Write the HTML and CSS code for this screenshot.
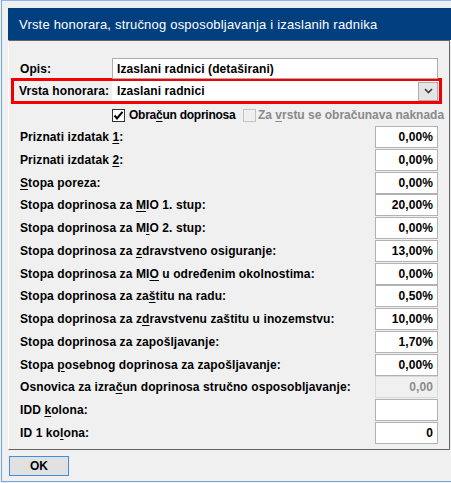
FILE: index.html
```html
<!DOCTYPE html>
<html>
<head>
<meta charset="utf-8">
<link rel="stylesheet" href="styles.css">
</head>
<body>
<div class="window">
  <div class="titlebar">Vrste honorara, stručnog osposobljavanja i izaslanih radnika</div>
  <div class="panel">
    <div class="row-text">
      <span class="lbl lbl-main">Opis:</span>
      <div class="textbox">Izaslani radnici (detaširani)</div>
    </div>
    <div class="row-combo">
      <span class="lbl lbl-combo">Vrsta honorara:</span>
      <div class="combo">
        <span class="combo-val">Izaslani radnici</span>
        <span class="combo-btn"><svg width="9" height="6" viewBox="0 0 9 6"><polyline points="1,1 4.5,4.5 8,1" fill="none" stroke="#3c3c3c" stroke-width="1.6"/></svg></span>
      </div>
    </div>
    <div class="row-check">
      <span class="check"><svg width="11" height="11" viewBox="0 0 11 11"><polyline points="1.5,5.5 4,8.5 9.5,1.8" fill="none" stroke="#000" stroke-width="2"/></svg></span>
      <span class="check-lbl first">Obra<u>č</u>un doprinosa</span>
      <span class="check check-dis"></span>
      <span class="check-lbl dis">Za <u>v</u>rstu se obračunava naknada</span>
    </div>
    <div class="grid">
      <span class="lbl">Priznati izdatak <u>1</u>:</span><div class="num">0,00%</div>
      <span class="lbl">Priznati izdatak <u>2</u>:</span><div class="num">0,00%</div>
      <span class="lbl"><u>S</u>topa poreza:</span><div class="num">0,00%</div>
      <span class="lbl">Stopa doprinosa za <u>M</u>IO 1. stup:</span><div class="num">20,00%</div>
      <span class="lbl">Stopa doprinosa za M<u>I</u>O 2. stup:</span><div class="num">0,00%</div>
      <span class="lbl">Stopa doprinosa za <u>z</u>dravstveno osiguranje:</span><div class="num">13,00%</div>
      <span class="lbl">Stopa doprinosa za MI<u>O</u> u određenim okolnostima:</span><div class="num">0,00%</div>
      <span class="lbl">Stopa doprinosa za za<u>š</u>titu na radu:</span><div class="num">0,50%</div>
      <span class="lbl">Stopa doprinosa za z<u>d</u>ravstvenu zaštitu u inozemstvu:</span><div class="num">10,00%</div>
      <span class="lbl">Stopa doprinosa za zapošljavanje:</span><div class="num">1,70%</div>
      <span class="lbl">Stopa <u>p</u>osebnog doprinosa za zapošljavanje:</span><div class="num">0,00%</div>
      <span class="lbl">Osnovica za izra<u>č</u>un doprinosa stručno osposobljavanje:</span><div class="num num-dis">0,00</div>
      <span class="lbl">IDD <u>k</u>olona:</span><div class="num"></div>
      <span class="lbl">ID 1 ko<u>l</u>ona:</span><div class="num">0</div>
    </div>
  </div>
  <div class="footer">
    <div class="btn">OK</div>
  </div>
</div>
</body>
</html>
```
FILE: styles.css
```css
html, body {
  margin: 0;
  padding: 0;
  background: #f0f0f0;
}
body {
  width: 451px;
  height: 483px;
  overflow: hidden;
  font-family: "Liberation Sans", Arial, sans-serif;
  font-weight: bold;
  font-size: 12px;
  letter-spacing: 0.1px;
  color: #000;
}
.window {
  margin-left: 1px;
  height: 482px;
  border-left: 1px solid #6fa5e3;
  border-top: 1px solid #8ab8ec;
  border-bottom: 1px solid #6fa5e3;
  padding: 7px 0 0 6px;
  box-sizing: border-box;
}
.titlebar {
  height: 32px;
  background: #013f7f;
  color: #fff;
  font-family: "Liberation Sans", sans-serif;
  font-weight: normal;
  font-size: 13px;
  letter-spacing: 0.2px;
  display: flex;
  align-items: center;
  padding-left: 11px;
}
.panel {
  margin-right: 1px;
  border-top: 1px solid #646464;
  border-left: 1px solid #fcfcfc;
  border-right: 1px solid #646464;
  border-bottom: 1px solid #646464;
  padding: 17px 11px 4px 11px;
}
.lbl {
  white-space: nowrap;
}
.row-text {
  display: flex;
  align-items: center;
  height: 21px;
}
.lbl-main {
  width: 92px;
  flex: none;
}
.textbox {
  flex: 1;
  height: 21px;
  box-sizing: border-box;
  border: 1px solid #acacac;
  background: #fff;
  padding-left: 4px;
  display: flex;
  align-items: center;
}
.row-combo {
  margin: -1px -4px 0 -9px;
  border: 3px solid #f20000;
  height: 20px;
  display: flex;
  align-items: center;
  padding: 0 1px 0 5px;
}
.lbl-combo {
  width: 93px;
  flex: none;
}
.combo {
  flex: 1;
  height: 20px;
  box-sizing: border-box;
  background: #fff;
  display: flex;
  align-items: center;
  padding-left: 5px;
}
.combo-val {
  flex: 1;
}
.combo-btn {
  width: 20px;
  height: 19px;
  box-sizing: border-box;
  border: 1px solid #adadad;
  background: #e5e5e5;
  display: flex;
  align-items: center;
  justify-content: center;
}
.row-check {
  height: 22px;
  display: flex;
  align-items: center;
  padding-left: 92px;
}
.check {
  width: 13px;
  height: 13px;
  box-sizing: border-box;
  border: 1px solid #333;
  background: #fff;
  display: flex;
  align-items: center;
  justify-content: center;
  flex: none;
}
.check-lbl {
  margin-left: 4px;
  white-space: nowrap;
}
.check-lbl.first {
  width: 110px;
  flex: none;
  letter-spacing: -0.25px;
}
.check-dis {
  margin-left: 4px;
  border-color: #c4c4c4;
  background: #f0f0f0;
}
.check-lbl.dis {
  margin-left: 2px;
  color: #8a8a8a;
  letter-spacing: 0;
}
.grid {
  display: grid;
  grid-template-columns: minmax(0, 1fr) 63px;
  grid-auto-rows: 22.77px;
  align-items: start;
}
.grid .lbl {
  height: 22px;
  line-height: 22px;
}
.num {
  height: 22px;
  box-sizing: border-box;
  border: 1px solid #b2b2b2;
  background: #fff;
  text-align: right;
  padding-right: 4px;
  line-height: 20px;
}
.num-dis {
  background: #f0f0f0;
  border-color: #d9d9d9;
  color: #8c8c8c;
}
.footer {
  padding: 6px 0 0 1px;
}
.btn {
  width: 60px;
  height: 20px;
  box-sizing: border-box;
  border: 1px solid #3f8ee4;
  background: #e1e1e1;
  display: flex;
  align-items: center;
  justify-content: center;
}
u {
  text-decoration-thickness: 1px;
  text-underline-offset: 2px;
}
```
